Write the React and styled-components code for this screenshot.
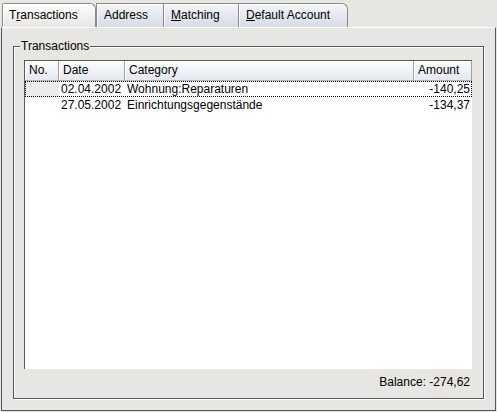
import React from "react";
import styled, { createGlobalStyle } from "styled-components";

const GlobalStyle = createGlobalStyle`
  html, body { margin: 0; padding: 0; background: #e8e6e3; }
  body { font: 12px "Liberation Sans", Arial, sans-serif; color: #000; }
`;

const Window = styled.div`
  width: 497px;
  height: 412px;
  display: flex;
  flex-direction: column;
  background: #e8e6e3;
  overflow: hidden;
  box-sizing: border-box;
`;

const TabBar = styled.div`
  display: flex;
  align-items: flex-end;
  height: 27px;
  padding-left: 2px;
  box-sizing: border-box;
`;

const Tab = styled.div`
  box-sizing: border-box;
  width: ${(p) => p.$w}px;
  height: 24px;
  display: flex;
  align-items: center;
  padding-left: ${(p) => (p.$active ? 6 : 7)}px;
  padding-bottom: 2px;
  white-space: nowrap;
  border-top: 1px solid #8a8a8a;
  border-left: 1px solid #8a8a8a;
  border-right: ${(p) => (p.$active || p.$last ? "1px solid #8a8a8a" : "none")};
  border-radius: ${(p) => (p.$active ? "2px 6px 0 0" : p.$last ? "0 6px 0 0" : "0")};
  background: ${(p) =>
    p.$active
      ? "linear-gradient(#fdfdfc, #eeedea 70%, #e8e6e3)"
      : "linear-gradient(#f3f5f8, #d6dce4)"};
  box-shadow: inset 1px 1px 0 rgba(255, 255, 255, 0.8);
`;

const Mnemonic = styled.span`
  text-decoration: underline;
`;

const Panel = styled.div`
  flex: 1;
  display: flex;
  flex-direction: column;
  margin: 0 1px 1px 1px;
  padding: 18px 11px 11px 11px;
  border-top: 1px solid #ffffff;
  border-left: 1px solid #555;
  border-right: 1px solid #555;
  border-bottom: 1px solid #555;
`;

const GroupBox = styled.div`
  position: relative;
  flex: 1;
  display: flex;
  flex-direction: column;
  border: 1px solid #555;
  box-shadow: 1px 1px 0 #fff, inset 1px 1px 0 #fff;
  padding: 13px 11px 0 10px;
`;

const GroupTitle = styled.span`
  position: absolute;
  top: -8px;
  left: 6px;
  padding: 0 1px;
  line-height: 14px;
  background: #e8e6e3;
`;

const TableBox = styled.div`
  flex: 1;
  display: flex;
  flex-direction: column;
  background: #fff;
  border-top: 1px solid #5a5a5a;
  border-left: 1px solid #5a5a5a;
`;

const Grid = styled.div`
  display: grid;
  grid-template-columns: 34px 66px 1fr 58px;
`;

const HeaderCell = styled.div`
  box-sizing: border-box;
  height: 20px;
  line-height: 19px;
  padding-left: 4px;
  border-right: 1px solid #a0a0a0;
  border-bottom: 1px solid #b4b4b4;
  background: linear-gradient(#fbfcfd, #e4e8ef);
  box-shadow: inset 1px 1px 0 #fff;
  white-space: nowrap;
`;

const Row = styled(Grid)`
  height: 16px;
  line-height: 16px;
  outline: ${(p) => (p.$focused ? "1px dotted #000" : "none")};
  outline-offset: -1px;
`;

const Cell = styled.div`
  padding: 0 2px;
  white-space: nowrap;
  overflow: hidden;
  text-align: ${(p) => (p.$right ? "right" : "left")};
  background: ${(p) => (p.$shade ? "#ececec" : "transparent")};
`;

const Footer = styled.div`
  text-align: right;
  line-height: 14px;
  padding: 6px 2px 9px 0;
`;

const rows = [
  { no: "", date: "02.04.2002", cat: "Wohnung:Reparaturen", amount: "-140,25", focused: true },
  { no: "", date: "27.05.2002", cat: "Einrichtungsgegenstände", amount: "-134,37" },
];

export default function App() {
  return (
    <Window>
      <GlobalStyle />
      <TabBar>
        <Tab $w={94} $active>
          T<Mnemonic>r</Mnemonic>ansactions
        </Tab>
        <Tab $w={67}>Address</Tab>
        <Tab $w={75}>
          <Mnemonic>M</Mnemonic>atching
        </Tab>
        <Tab $w={110} $last>
          <Mnemonic>D</Mnemonic>efault Account
        </Tab>
      </TabBar>
      <Panel>
        <GroupBox>
          <GroupTitle>Transactions</GroupTitle>
          <TableBox>
            <Grid>
              <HeaderCell>No.</HeaderCell>
              <HeaderCell>Date</HeaderCell>
              <HeaderCell>Category</HeaderCell>
              <HeaderCell>Amount</HeaderCell>
            </Grid>
            {rows.map((r, i) => (
              <Row key={i} $focused={r.focused}>
                <Cell $shade={r.focused}>{r.no}</Cell>
                <Cell>{r.date}</Cell>
                <Cell>{r.cat}</Cell>
                <Cell $right>{r.amount}</Cell>
              </Row>
            ))}
          </TableBox>
          <Footer>Balance: -274,62</Footer>
        </GroupBox>
      </Panel>
    </Window>
  );
}
